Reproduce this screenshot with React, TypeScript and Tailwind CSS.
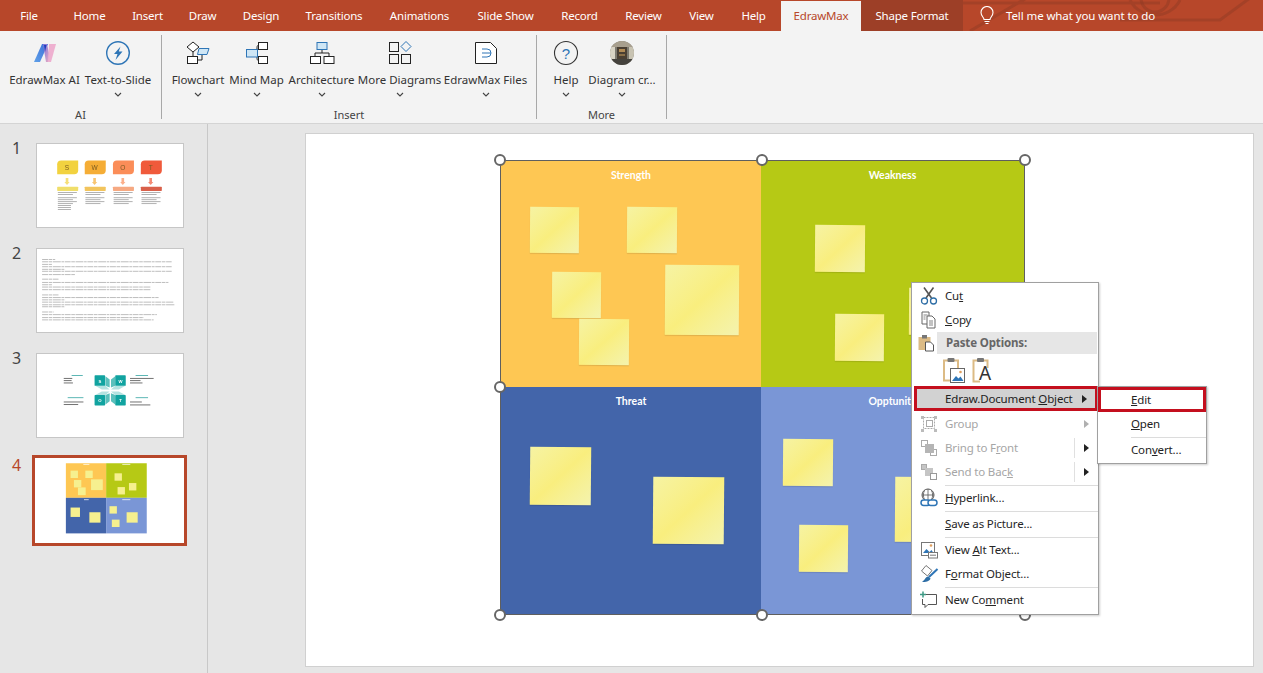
import React from "react";

const tabs = [
  { t: "File", w: "w-[58px]" },
  { t: "Home", w: "w-[63px]" },
  { t: "Insert", w: "w-[53px]" },
  { t: "Draw", w: "w-[57px]" },
  { t: "Design", w: "w-[60px]" },
  { t: "Transitions", w: "w-[86px]" },
  { t: "Animations", w: "w-[85px]" },
  { t: "Slide Show", w: "w-[87px]" },
  { t: "Record", w: "w-[61px]" },
  { t: "Review", w: "w-[67px]" },
  { t: "View", w: "w-[49px]" },
  { t: "Help", w: "w-[55px]" },
];

function Chevron() {
  return (
    <svg width="8" height="5" viewBox="0 0 8 5" fill="none" stroke="#444" strokeWidth="1.1">
      <path d="M1 1l3 3 3-3" />
    </svg>
  );
}

function RibbonBtn({ label, w, icon, chevron = true }: { label: string; w: string; icon: React.ReactNode; chevron?: boolean }) {
  return (
    <div className={`${w} flex flex-col items-center shrink-0`}>
      <div className="h-[28px] w-[28px] mt-[4px]">{icon}</div>
      <div className="mt-[5px] h-[16px] leading-[16px] text-[11.5px] text-[#333] whitespace-nowrap">{label}</div>
      {chevron && <div className="mt-[4px] h-[5px] flex"><Chevron /></div>}
    </div>
  );
}

const IconAI = (
  <svg viewBox="0 0 28 28" width="28" height="28">
    <defs>
      <linearGradient id="aiA" x1="0" y1="1" x2="1" y2="0"><stop offset="0" stopColor="#5fa0e8" /><stop offset="1" stopColor="#3b6fd8" /></linearGradient>
      <linearGradient id="aiB" x1="0" y1="0" x2="1" y2="1"><stop offset="0" stopColor="#7a6fd8" /><stop offset="1" stopColor="#f5b5c4" /></linearGradient>
    </defs>
    <path d="M3 23L11 5h6L9 23z" fill="url(#aiA)" />
    <path d="M12 5h4l4 18h-5z" fill="url(#aiB)" />
    <path d="M18 5h7l-5 18h-3z" fill="#eeb0d0" />
    <path d="M13 6l2.500 0-1.500 7z" fill="#1d3fc0" />
  </svg>
);
const IconBolt = (
  <svg viewBox="0 0 28 28" width="28" height="28">
    <circle cx="14" cy="14" r="11.300" fill="none" stroke="#2e75b6" strokeWidth="1.400" />
    <path d="M16.500 7.500L10 15h3.500l-2 6 7-8.500h-3.700z" fill="#2e75b6" />
  </svg>
);
const IconFlow = (
  <svg viewBox="0 0 28 28" width="28" height="28" fill="none" stroke="#222" strokeWidth="1">
    <path d="M9 3l6 5-6 5-6-5z" fill="#fff" />
    <path d="M9 13v4.500" />
    <rect x="3.500" y="17.500" width="10" height="7" fill="#fff" />
    <path d="M13.500 21H18v-6" />
    <path d="M15 9.500h10l-2 6H13.500z" fill="#cfe6f5" stroke="#2e75b6" />
  </svg>
);
const IconMind = (
  <svg viewBox="0 0 28 28" width="28" height="28" fill="none" stroke="#222" strokeWidth="1">
    <path d="M14 10c0-3 0-4 3-4M14 18c0 3 0 3.500 3 3.500" />
    <rect x="15.500" y="3.500" width="9" height="7" fill="#fff" />
    <rect x="15.500" y="17.500" width="9" height="7" fill="#fff" />
    <rect x="3.500" y="10.500" width="11" height="7.500" fill="#cfe6f5" stroke="#2e75b6" />
  </svg>
);
const IconArch = (
  <svg viewBox="0 0 28 28" width="28" height="28" fill="none" stroke="#222" strokeWidth="1">
    <path d="M14 10.500v3.500M7 17.500V14h14v3.500" />
    <rect x="9" y="3.500" width="10" height="7" fill="#cfe6f5" stroke="#2e75b6" />
    <rect x="2.500" y="17.500" width="10" height="7" fill="#fff" />
    <rect x="16" y="17.500" width="10" height="7" fill="#fff" />
  </svg>
);
const IconMore = (
  <svg viewBox="0 0 28 28" width="28" height="28" fill="none" stroke="#222" strokeWidth="1">
    <rect x="3.500" y="3.500" width="9" height="9" />
    <rect x="3.500" y="15.500" width="9" height="9" />
    <rect x="15.500" y="15.500" width="9" height="9" />
    <path d="M20 2.500l5 5-5 5-5-5z" stroke="#2e75b6" />
  </svg>
);
const IconFile = (
  <svg viewBox="0 0 28 28" width="28" height="28" fill="none">
    <path d="M3.500 3.500h15l6 6v15h-21z" fill="#fff" stroke="#222" />
    <path d="M10 10h5a4 4 0 010 8h-5M10 14h9" stroke="#2e75b6" strokeWidth="1" />
  </svg>
);
const IconHelp = (
  <svg viewBox="0 0 28 28" width="28" height="28">
    <circle cx="14" cy="14" r="11.500" fill="none" stroke="#333" strokeWidth="1.100" />
    <text x="14" y="19.500" textAnchor="middle" fontSize="15" fill="#2e75b6" fontFamily="Liberation Sans, sans-serif">?</text>
  </svg>
);
const IconAvatar = (
  <svg viewBox="0 0 28 28" width="28" height="28">
    <defs><clipPath id="av"><circle cx="14" cy="14" r="12" /></clipPath></defs>
    <g clipPath="url(#av)">
      <rect width="28" height="28" fill="#7d7a70" />
      <rect x="0" y="0" width="28" height="8" fill="#a89f8e" />
      <rect x="2" y="8" width="5" height="12" fill="#d8d3c4" />
      <rect x="21" y="8" width="5" height="12" fill="#c8c3b2" />
      <rect x="9" y="8" width="10" height="12" fill="#4a3f33" />
      <rect x="11" y="10" width="6" height="3" fill="#b08a55" />
      <rect x="11" y="15" width="6" height="2" fill="#8a6f48" />
      <rect x="0" y="20" width="28" height="8" fill="#45423d" />
    </g>
  </svg>
);

const Sep = () => <div className="w-px h-[84px] bg-[#a8a8a8] shrink-0" />;

function Group({ label, className, inner }: { label: string; className: string; inner: React.ReactNode }) {
  return (
    <div className={`${className} h-[88px] flex flex-col shrink-0`}>
      <div className="flex flex-1 items-start">{inner}</div>
      <div className="h-[16px] leading-[16px] text-center text-[11px] text-[#444]">{label}</div>
    </div>
  );
}

function Thumb1() {
  const cols = [
    { x: 168, c: "#f2d23f", t: "S", h: "#f0de6a" },
    { x: 252, c: "#f5ad36", t: "W", h: "#f2c45c" },
    { x: 338, c: "#fb8d58", t: "O", h: "#f6a982" },
    { x: 423, c: "#f05a3b", t: "T", h: "#d9604a" },
  ];
  return (
    <svg viewBox="107 40 444 253" className="w-full h-full block">
      {cols.map((c) => (
        <g key={c.t}>
          <path d={`M${c.x + 12} 90h52v30a12 12 0 01-12 12h-52v-30a12 12 0 0112-12z`} fill={c.c} />
          <text x={c.x + 30} y="119" textAnchor="middle" fontSize="20" fill="#7a5a20" fontFamily="Liberation Sans, sans-serif">{c.t}</text>
          <path d={`M${c.x + 26} 144h8v12h4l-8 9-8-9h4z`} fill={c.c} opacity="0.7" />
          <rect x={c.x} y="170" width="64" height="13" rx="2" fill={c.h} />
          {[187, 193, 203, 209, 215, 221].map((y, i) => (
            <rect key={y} x={c.x + 2} y={y} width={i % 2 ? 46 : 58} height="2" fill="#8a8a8a" />
          ))}
        </g>
      ))}
      {[227, 233, 239].map((y) => <rect key={y} x="170" y={y} width="40" height="2" fill="#8a8a8a" />)}
    </svg>
  );
}

function Thumb2() {
  const lines: [number, number][] = [
    [387, 40], [394, 395], [402, 30], [409, 395], [417, 70], [423, 395], [433, 100],
    [447, 50], [457, 385], [464, 30], [471, 330], [479, 330],
    [495, 50], [503, 355], [510, 70], [517, 400], [525, 405], [531, 70],
    [547, 35], [555, 350], [564, 310], [571, 340],
  ];
  return (
    <svg viewBox="107 355 444 253" className="w-full h-full block">
      {lines.map(([y, w]) => <line key={y} x1="122" x2={122 + w} y1={y} y2={y} stroke="#9a9a9a" strokeWidth="2" strokeDasharray="18 2 11 2 24 2 8 2" />)}
    </svg>
  );
}

function Thumb3() {
  return (
    <svg viewBox="107 40 444 253" className="w-full h-full block">
      <path d="M315 108l13 10v24l-13-5zM345 108l-13 10v24l13-5zM315 194l13-10v-24l-13 5zM345 194l-13-10v-24l13 5z" fill="#5cc0bc" />
      <path d="M284 137h31l13 11h-24zM376 137h-31l-13 11h24zM284 165h31l13-11h-24zM376 165h-31l-13-11h24z" fill="#b5e2e0" />
      {[[282, 105, "S"], [345, 105, "W"], [282, 165, "O"], [345, 165, "T"]].map(([x, y, t]) => (
        <g key={t as string}>
          <rect x={x as number} y={y as number} width="32" height="32" rx="2" fill="#11a3a0" />
          <text x={(x as number) + 16} y={(y as number) + 22} textAnchor="middle" fontSize="13" fontWeight="bold" fill="#fff" fontFamily="Liberation Sans, sans-serif">{t}</text>
        </g>
      ))}
      <rect x="212" y="104" width="34" height="2.500" fill="#3aa8a5" />
      <rect x="407" y="104" width="38" height="2.500" fill="#3aa8a5" />
      <rect x="200" y="172" width="48" height="2.500" fill="#3aa8a5" />
      <rect x="407" y="172" width="38" height="2.500" fill="#3aa8a5" />
      {[[188, 113, 26], [188, 120, 24], [188, 127, 28], [390, 113, 72], [390, 120, 32], [390, 127, 38], [188, 185, 60], [188, 193, 44], [390, 185, 36], [390, 194, 62]].map(([x, y, w]) => (
        <rect key={`${x}-${y}`} x={x} y={y} width={w} height="2.500" fill="#555" />
      ))}
    </svg>
  );
}

function Thumb4() {
  const notes = [[212, 392, 22, 22], [256, 392, 22, 22], [222, 420, 22, 22], [234, 442, 23, 23], [273, 418, 35, 32], [343, 400, 22, 22], [352, 441, 22, 22], [386, 429, 22, 22], [212, 502, 28, 28], [268, 516, 33, 31], [328, 498, 22, 22], [335, 538, 23, 22], [379, 516, 33, 31]];
  return (
    <svg viewBox="106 355 444 252" className="w-full h-full block">
      <rect x="198" y="370" width="120" height="103" fill="#fec753" />
      <rect x="318" y="370" width="121" height="103" fill="#b6c915" />
      <rect x="198" y="473" width="120" height="106" fill="#4365aa" />
      <rect x="318" y="473" width="121" height="106" fill="#7a96d6" />
      {[[250, 372, 18], [366, 372, 24], [252, 477, 14], [366, 477, 24]].map(([x, y, w]) => <rect key={`${x}${y}`} x={x} y={y} width={w} height="3" fill="#fff" opacity="0.7" />)}
      {notes.map(([x, y, w, h]) => <rect key={`${x}-${y}`} x={x} y={y} width={w} height={h} fill="#f6f08f" />)}
    </svg>
  );
}

const noteBase = "absolute rotate-[0.5deg] bg-gradient-to-br from-[#f6f3a3] via-[#f9ee7e] to-[#f4f3ae] shadow-[0_1px_1px_rgba(0,0,0,0.12)]";

function Handle({ className }: { className: string }) {
  return <div className={`absolute w-[12px] h-[12px] rounded-full bg-white border-2 border-[#666] z-10 ${className}`} />;
}

function Title({ children }: { children: React.ReactNode }) {
  return <div className="pt-[7px] text-center text-white font-bold text-[10.500px] leading-[14px]" style={{ fontFamily: "Lato, sans-serif" }}>{children}</div>;
}

function MenuRow({ icon, children, disabled, arrow, tick }: { icon?: React.ReactNode; children: React.ReactNode; disabled?: boolean; arrow?: "dark" | "gray"; tick?: boolean }) {
  return (
    <div className={`h-[24px] flex items-center relative ${disabled ? "text-[#a6a6a6]" : "text-[#262626]"}`}>
      <div className="w-[33px] h-[24px] flex items-center justify-center shrink-0">{icon}</div>
      <div className="flex-1 whitespace-nowrap leading-[24px]">{children}</div>
      {tick && <div className="w-px h-[20px] bg-[#e0e0e0] mr-[9px]" />}
      {arrow && <Arrow color={arrow === "dark" ? "#222" : "#b0b0b0"} />}
    </div>
  );
}

function Arrow({ color }: { color: string }) {
  return (
    <svg width="5" height="8" viewBox="0 0 5 8" className="mr-[9px] shrink-0"><path d="M0 0l5 4-5 4z" fill={color} /></svg>
  );
}

const MSep = () => <div className="h-[2px] flex items-center ml-[33px]"><div className="h-px w-full bg-[#dcdcdc]" /></div>;

const I = { width: 20, height: 20, viewBox: "0 0 20 20", fill: "none" };

const ICut = (
  <svg {...I}>
    <path d="M5 1.500l7.500 10.500M14.500 1.500L7 12" stroke="#555" strokeWidth="1.600" />
    <circle cx="5.500" cy="15" r="3" stroke="#2e6ea6" strokeWidth="1.300" />
    <circle cx="14.500" cy="15" r="3" stroke="#2e6ea6" strokeWidth="1.300" />
  </svg>
);
const ICopy = (
  <svg {...I}>
    <path d="M3 2h7v12H3z" fill="#fff" stroke="#666" />
    <path d="M8 6h5l3 3v9H8z" fill="#fff" stroke="#666" />
    <path d="M10 11h4M10 13h4M10 15h4M4.500 5h4M4.500 7h2M4.500 9h2" stroke="#666" strokeWidth="0.800" />
  </svg>
);
const IPaste = (
  <svg {...I}>
    <rect x="2.500" y="4" width="12" height="13" fill="#dcbb85" />
    <rect x="6" y="2" width="5" height="3.500" fill="#777" />
    <path d="M9.500 9h5l3 3v6h-8z" fill="#fff" stroke="#555" />
  </svg>
);
const IGroup = (
  <svg {...I} stroke="#aaa">
    <path d="M4.500 3.500h11v11h-11z" strokeDasharray="2 1" />
    <rect x="7.500" y="6.500" width="6" height="6" />
    <rect x="2" y="2" width="3" height="3" fill="#bbb" stroke="none" />
    <rect x="15" y="2" width="3" height="3" fill="#bbb" stroke="none" />
    <rect x="2" y="15" width="3" height="3" fill="#bbb" stroke="none" />
    <rect x="15" y="15" width="3" height="3" fill="#bbb" stroke="none" />
  </svg>
);
const IFront = (
  <svg {...I}>
    <rect x="2.500" y="2.500" width="6" height="6" stroke="#aaa" />
    <rect x="11.500" y="11.500" width="6" height="6" stroke="#aaa" />
    <rect x="6" y="6" width="9" height="9" fill="#b5b5b5" />
  </svg>
);
const IBack = (
  <svg {...I}>
    <rect x="2.500" y="2.500" width="5" height="5" fill="#c5c5c5" stroke="#aaa" />
    <rect x="6" y="6" width="8" height="8" fill="#c5c5c5" />
    <rect x="11.500" y="11.500" width="6" height="6" fill="#fff" stroke="#999" />
  </svg>
);
const ILink = (
  <svg {...I}>
    <circle cx="9" cy="7" r="6" stroke="#555" strokeWidth="1" />
    <path d="M3 7h12M9 1v12M5.500 2.500c-1.500 3-1.500 6 0 9M12.500 2.500c1.500 3 1.500 6 0 9" stroke="#555" strokeWidth="0.800" />
    <rect x="2" y="12" width="9" height="5.500" rx="2.700" fill="#fff" stroke="#2e75b6" strokeWidth="1.500" />
    <rect x="9" y="12" width="9" height="5.500" rx="2.700" fill="#fff" stroke="#2e75b6" strokeWidth="1.500" />
  </svg>
);
const IAlt = (
  <svg {...I}>
    <rect x="2.500" y="2.500" width="13" height="13" fill="#fff" stroke="#777" />
    <path d="M4 13l3.500-4 3 3 2-2 2 3z" fill="#2e75b6" />
    <circle cx="12" cy="5.500" r="1.300" fill="#e0a060" />
    <rect x="9.500" y="12.500" width="9" height="5.500" fill="#fff" stroke="#777" />
    <path d="M11 15.200h6" stroke="#777" />
  </svg>
);
const IFormat = (
  <svg {...I}>
    <path d="M7 1.500l6 5-4.500 5.500-6-5z" fill="#fff" stroke="#777" />
    <path d="M18.500 5L10 13" stroke="#2e75b6" strokeWidth="2" />
    <path d="M9.500 12.500c-3 0-3 3-6.500 5.500 4 .5 8-1 8.500-3.500z" fill="#2e6ea6" />
  </svg>
);
const IComment = (
  <svg {...I}>
    <path d="M6 4.500h11.500v10H9l-3 3v-3H3.500V9" stroke="#555" strokeWidth="1" />
    <path d="M4 1.500v6M1 4.500h6" stroke="#3e9a85" strokeWidth="1.500" />
  </svg>
);
const IClipPic = (
  <svg width="24" height="26" viewBox="0 0 24 26" fill="none">
    <path d="M3 3.500h14v20H3z" fill="#fff" stroke="#dcbb85" strokeWidth="2" />
    <rect x="6.500" y="1" width="7" height="4" rx="1" fill="#777" />
    <rect x="9.500" y="11.500" width="14" height="14" fill="#fff" stroke="#666" />
    <path d="M11 24l4-5 2.500 2.500 2-2 3 4.500z" fill="#2e75b6" />
    <circle cx="19.500" cy="15" r="1.300" fill="#e0a060" />
  </svg>
);
const IClipA = (
  <div className="relative w-[24px] h-[26px]">
    <svg width="24" height="26" viewBox="0 0 24 26" fill="none" className="absolute inset-0">
      <path d="M9 24.500H2.500V3.500h14V11" stroke="#dcbb85" strokeWidth="2" />
      <rect x="6" y="1" width="7" height="4" rx="1" fill="#777" />
    </svg>
    <span className="absolute left-[8px] top-[7px] text-[19px] leading-[19px] text-[#333]">A</span>
  </div>
);

export default function App() {
  return (
    <div className="relative w-[1263px] h-[673px] overflow-hidden flex flex-col bg-[#e6e6e6]" style={{ fontFamily: '"Noto Sans", sans-serif' }}>
      {/* Tab bar */}
      <div className="relative h-[31px] bg-[#b7472a] flex text-[11.500px] tracking-[-0.2px] text-white shrink-0">
        <svg className="absolute left-[840px] top-0" width="423" height="31" fill="none" stroke="#8f3a24" strokeOpacity="0.45" strokeWidth="3">
          <circle cx="55" cy="-2" r="20" />
          <path d="M130 31L190 -4M20 3h300M280 20h100l30-22M290 0c10 20 40 20 50 0" />
          <circle cx="315" cy="-2" r="14" />
        </svg>
        {tabs.map((t) => (
          <div key={t.t} className={`${t.w} relative h-full flex items-center justify-center shrink-0 pt-px`}>{t.t}</div>
        ))}
        <div className="relative w-[80px] mt-px bg-[#f3f3f3] text-[#b7472a] flex items-center justify-center shrink-0">EdrawMax</div>
        <div className="relative w-[102px] bg-[#9d3f27] flex items-center justify-center shrink-0 pt-px">Shape Format</div>
        <div className="relative flex items-center ml-[16px]">
          <svg width="16" height="20" viewBox="0 0 16 20" fill="none" stroke="#fff" strokeWidth="1.100">
            <path d="M5 13.500c0-2-3-3.500-3-7a6 6 0 0112 0c0 3.500-3 5-3 7z" />
            <path d="M5.500 15.500h5M6.500 17.500h3" />
          </svg>
          <span className="ml-[11px] tracking-[-0.1px] whitespace-nowrap">Tell me what you want to do</span>
        </div>
      </div>

      {/* Ribbon */}
      <div className="h-[93px] bg-[#f3f3f3] border-b border-[#d4d4d4] flex items-start pt-[4px] shrink-0">
        <Group
          label="AI"
          className="w-[161px]"
          inner={
            <div className="flex pl-[9px] gap-[4px]">
              <RibbonBtn label="EdrawMax AI" w="w-[71px]" icon={IconAI} chevron={false} />
              <RibbonBtn label="Text-to-Slide" w="w-[68px]" icon={IconBolt} />
            </div>
          }
        />
        <Sep />
        <Group
          label="Insert"
          className="w-[374px]"
          inner={
            <div className="flex pl-[10px] gap-[5px]">
              <RibbonBtn label="Flowchart" w="w-[52px]" icon={IconFlow} />
              <RibbonBtn label="Mind Map" w="w-[55px]" icon={IconMind} />
              <RibbonBtn label="Architecture" w="w-[65px]" icon={IconArch} />
              <RibbonBtn label="More Diagrams" w="w-[81px]" icon={IconMore} />
              <RibbonBtn label="EdrawMax Files" w="w-[81px]" icon={IconFile} />
            </div>
          }
        />
        <Sep />
        <Group
          label="More"
          className="w-[129px]"
          inner={
            <div className="flex pl-[16px] gap-[10px]">
              <RibbonBtn label="Help" w="w-[26px]" icon={IconHelp} />
              <RibbonBtn label="Diagram cr..." w="w-[66px]" icon={IconAvatar} />
            </div>
          }
        />
        <Sep />
      </div>

      {/* Body */}
      <div className="flex flex-1 min-h-0">
        <div className="w-[208px] border-r border-[#c8c8c8] shrink-0 pt-[19px] flex flex-col gap-[20px]">
          {[<Thumb1 key="1" />, <Thumb2 key="2" />, <Thumb3 key="3" />].map((th, i) => (
            <div key={i} className="flex h-[85px]">
              <div className="w-[36px] pl-[12px] text-[16px] leading-[20px] mt-[-5px] text-[#444]">{i + 1}</div>
              <div className="w-[148px] h-[85px] bg-white border border-[#c6c6c6] overflow-hidden"><div className="w-full h-full blur-[0.4px]">{th}</div></div>
            </div>
          ))}
          <div className="flex h-[91px] -mt-[3px]">
            <div className="w-[32px] pl-[12px] text-[16px] leading-[20px] text-[#b7472a]">4</div>
            <div className="w-[155px] h-[91px] bg-white border-[3px] border-[#b7472a] overflow-hidden"><div className="w-full h-full blur-[0.3px]"><Thumb4 /></div></div>
          </div>
        </div>

        <div className="flex-1 pl-[97px] pt-[9px]">
          <div className="w-[949px] h-[534px] bg-white border border-[#d0d0d0] pl-[194px] pt-[26px]">
            <div className="relative w-[525px] h-[455px] border border-[#5f5f5f] grid grid-cols-[260px_1fr] grid-rows-[226px_1fr]">
              <div className="relative bg-[#fec753]">
                <Title>Strength</Title>
                <div className={`${noteBase} left-[29px] top-[46px] w-[49px] h-[46px]`} />
                <div className={`${noteBase} left-[126px] top-[46px] w-[50px] h-[46px]`} />
                <div className={`${noteBase} left-[51px] top-[111px] w-[49px] h-[46px]`} />
                <div className={`${noteBase} left-[78px] top-[158px] w-[50px] h-[46px]`} />
                <div className={`${noteBase} left-[164px] top-[104px] w-[74px] h-[70px]`} />
              </div>
              <div className="relative bg-[#b6c915]">
                <Title>Weakness</Title>
                <div className={`${noteBase} left-[54px] top-[64px] w-[50px] h-[47px]`} />
                <div className={`${noteBase} left-[74px] top-[153px] w-[49px] h-[47px]`} />
                <div className={`${noteBase} left-[148px] top-[127px] w-[50px] h-[47px]`} />
              </div>
              <div className="relative bg-[#4365aa]">
                <Title>Threat</Title>
                <div className={`${noteBase} left-[29px] top-[60px] w-[61px] h-[58px]`} />
                <div className={`${noteBase} left-[152px] top-[90px] w-[71px] h-[67px]`} />
              </div>
              <div className="relative bg-[#7a96d6]">
                <Title>Opptunity</Title>
                <div className={`${noteBase} left-[22px] top-[52px] w-[50px] h-[47px]`} />
                <div className={`${noteBase} left-[38px] top-[138px] w-[49px] h-[47px]`} />
                <div className={`${noteBase} left-[134px] top-[90px] w-[71px] h-[65px]`} />
              </div>
              <Handle className="-left-[7px] -top-[7px]" />
              <Handle className="left-[255px] -top-[7px]" />
              <Handle className="-right-[7px] -top-[7px]" />
              <Handle className="-left-[7px] top-[220px]" />
              <Handle className="-left-[7px] -bottom-[7px]" />
              <Handle className="left-[255px] -bottom-[7px]" />
              <Handle className="-right-[7px] -bottom-[7px]" />
            </div>
          </div>
        </div>
      </div>

      {/* Context menu */}
      <div className="absolute left-[911px] top-[282px] w-[188px] h-[333px] bg-white border border-[#a0a0a0] py-px text-[11.500px] tracking-[-0.15px] shadow-[1px_1px_2px_rgba(0,0,0,0.2)] z-20">
        <MenuRow icon={ICut}>Cu<u>t</u></MenuRow>
        <MenuRow icon={ICopy}><u>C</u>opy</MenuRow>
        <div className="h-[22px] flex items-center">
          <div className="w-[25px] h-[22px] flex items-center justify-center shrink-0 pl-[3px]">{IPaste}</div>
          <div className="flex-1 h-[22px] bg-[#e6e6e6] pl-[9px] mr-px font-bold text-[#666] leading-[22px]">Paste Options:</div>
        </div>
        <div className="h-[32px] flex items-center pl-[29px] gap-[6px]">
          {IClipPic}
          {IClipA}
        </div>
        <div className="h-[25px] ml-[2px] border-[3px] border-[#c40f1e] bg-[#d2d2d2] flex items-center text-[#222]">
          <div className="w-[28px] shrink-0" />
          <div className="flex-1 whitespace-nowrap">Edraw.Document <u>O</u>bject</div>
          <svg width="5" height="8" viewBox="0 0 5 8" className="mr-[8px]"><path d="M0 0l5 4-5 4z" fill="#222" /></svg>
        </div>
        <div className="h-px" />
        <MenuRow icon={IGroup} disabled arrow="gray">Group</MenuRow>
        <MenuRow icon={IFront} disabled arrow="dark" tick>Bring to F<u>r</u>ont</MenuRow>
        <MenuRow icon={IBack} disabled arrow="dark" tick>Send to Bac<u>k</u></MenuRow>
        <MSep />
        <MenuRow icon={ILink}><u>H</u>yperlink...</MenuRow>
        <MSep />
        <MenuRow><u>S</u>ave as Picture...</MenuRow>
        <MSep />
        <MenuRow icon={IAlt}>View <u>A</u>lt Text...</MenuRow>
        <MenuRow icon={IFormat}>F<u>o</u>rmat Object...</MenuRow>
        <MSep />
        <MenuRow icon={IComment}>New Co<u>m</u>ment</MenuRow>
      </div>

      {/* Submenu */}
      <div className="absolute left-[1097px] top-[386px] w-[110px] h-[78px] bg-white border border-[#a0a0a0] text-[11.500px] tracking-[-0.15px] text-[#222] shadow-[1px_1px_2px_rgba(0,0,0,0.2)] z-30">
        <div className="h-[25px] border-[3px] border-[#c40f1e] pl-[30px] leading-[19px] bg-white"><u>E</u>dit</div>
        <div className="h-[24px] pl-[33px] leading-[24px]"><u>O</u>pen</div>
        <div className="h-[2px] ml-[33px] flex items-center"><div className="h-px w-full bg-[#dcdcdc]" /></div>
        <div className="h-[24px] pl-[33px] leading-[24px]">Con<u>v</u>ert...</div>
      </div>
    </div>
  );
}
